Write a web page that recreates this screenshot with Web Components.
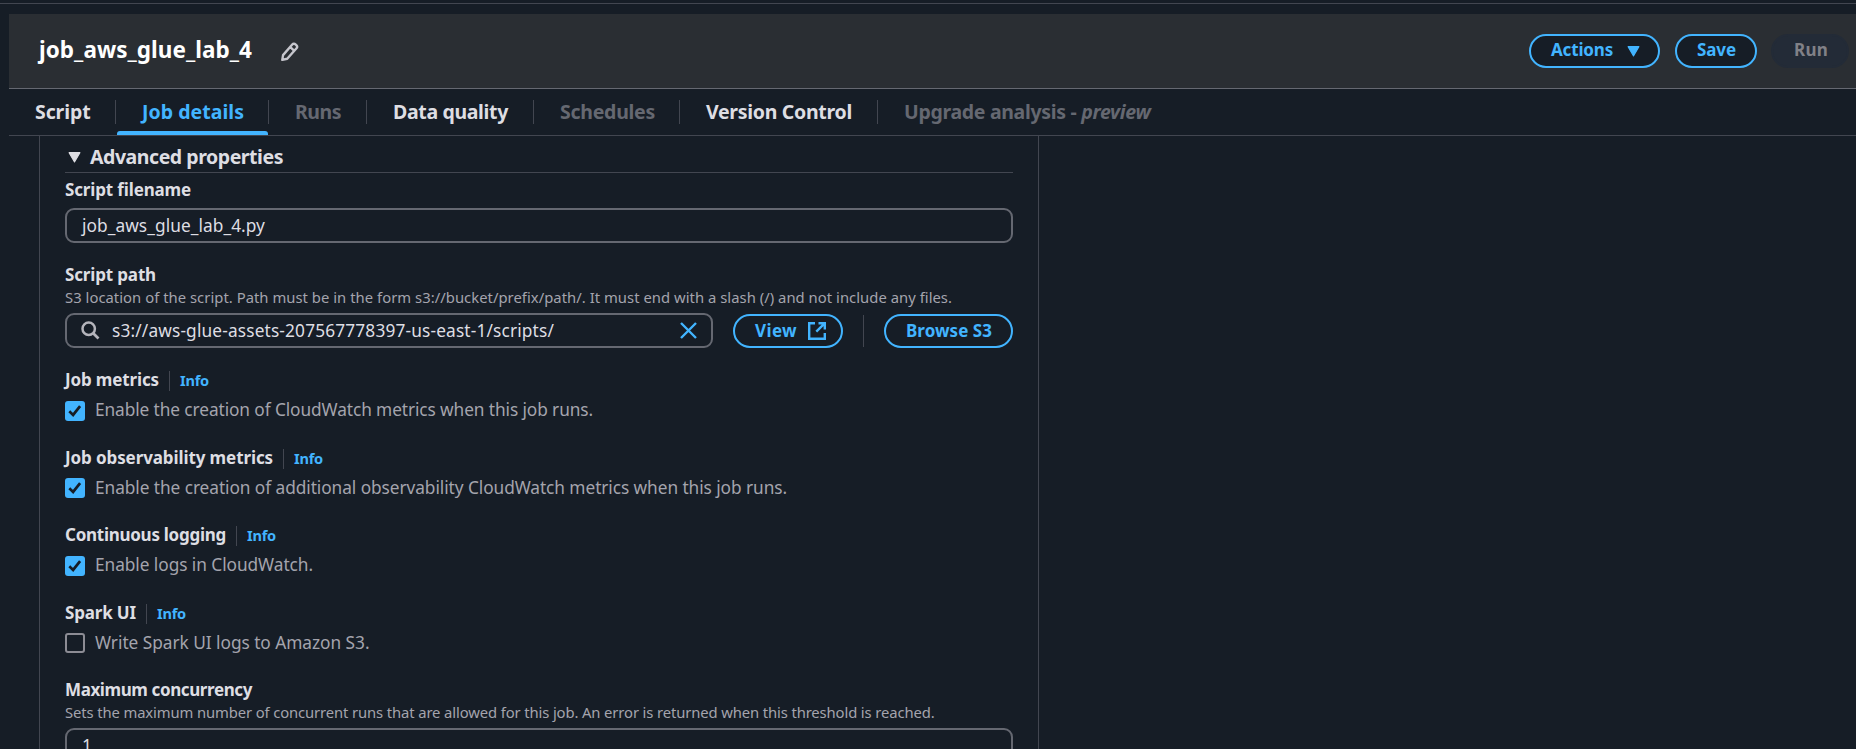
<!DOCTYPE html>
<html lang="en">
<head>
<meta charset="utf-8">
<title>job_aws_glue_lab_4</title>
<style>
html,body{margin:0;height:100%;background:#161d26;overflow:hidden}
body{font-family:"Noto Sans","Open Sans",sans-serif;color:#dedee3;font-size:17px}
</style>
</head>
<body>
<glue-page></glue-page>
<script>
const fitted = new Set();
function define(name, html, setup) {
  const tpl = document.createElement('template');
  tpl.innerHTML = html;
  customElements.define(name, class extends HTMLElement {
    constructor() {
      super();
      this.attachShadow({ mode: 'open' }).append(tpl.content.cloneNode(true));
    }
    connectedCallback() { if (setup) setup(this, this.shadowRoot); }
  });
}

/* One line of text, tracked so that it spans the width in its "w" attribute. */
define('fit-text', `<style>:host{display:inline-block;white-space:pre;flex:none}</style><slot></slot>`, el => fitted.add(el));

const icons = {
  pencil: ['0 0 20 22', '<path d="M2.4 19.8 3.2 14.8 12.9 3.6a2.4 2.4 0 0 1 3.4-.2l.9.8a2.4 2.4 0 0 1 .2 3.3L7.6 18.6ZM10.6 6.2l4.2 3.9" fill="none" stroke="currentColor" stroke-width="2.5" stroke-linejoin="round"/>'],
  caret: ['0 0 12 10', '<path d="M1 .5h10L6 9.2Z" fill="currentColor" stroke="currentColor" stroke-width="1" stroke-linejoin="round"/>'],
  search: ['0 0 19 19', '<circle cx="7.7" cy="7.7" r="6.2" fill="none" stroke="currentColor" stroke-width="2.5"/><path d="m12.2 12.2 5.3 5.3" stroke="currentColor" stroke-width="2.7"/>'],
  close: ['0 0 17 17', '<path d="m1 1 15 15M16 1 1 16" stroke="currentColor" stroke-width="2.4"/>'],
  external: ['0 0 18 18', '<path d="M7 1.2H1.2v15.6h15.6V11M10.5 1.2h6.3V7.5M16.6 1.4 8.3 9.7" fill="none" stroke="currentColor" stroke-width="2.4"/>'],
  check: ['0 0 20 20', '<path d="m4.3 10.3 3.8 3.6 7-8.8" fill="none" stroke="currentColor" stroke-width="2.7"/>']
};
define('ui-icon', `<style>:host{display:block;flex:none}svg{display:block;width:100%;height:100%}</style><svg></svg>`, (el, r) => {
  const [box, body] = icons[el.getAttribute('name')];
  const svg = r.querySelector('svg');
  svg.setAttribute('viewBox', box);
  svg.innerHTML = body;
});

define('ui-button', `<style>
:host{display:flex;align-items:center;box-sizing:border-box;height:34px;border:2px solid #42b4ff;border-radius:18px;padding:0 20px;color:#42b4ff;background:#161d26;font-weight:700;font-size:17px;line-height:28px;flex:none}
:host([disabled]){border-color:#232b37;background:#232b37;color:#818187}
</style><slot></slot>`);

define('page-header', `<style>
:host{display:flex;align-items:center;box-sizing:border-box;height:75px;margin-left:9px;padding:0 7px 0 30px;background:#2a2e33;border-bottom:1px solid #656871}
h1{margin:0 0 1px;font-size:22.5px;line-height:30px;color:#fff;font-weight:700}
.pen{width:19px;height:21px;margin:1px 0 0 27.5px;color:#c6c6cd}
.gap{flex:1}
fit-text{margin-bottom:1px}
.a{width:131px;margin-right:15px}.a ui-icon{width:13px;height:11px;margin:1px 0 0 14px}
.s{width:82px;margin-right:14px}.r{width:78px;padding-left:21px}
ui-button{padding-bottom:1px}
</style>
<h1><fit-text w="213">job_aws_glue_lab_4</fit-text></h1><ui-icon class="pen" name="pencil"></ui-icon><div class="gap"></div>
<ui-button class="a"><fit-text w="62">Actions</fit-text><ui-icon name="caret"></ui-icon></ui-button>
<ui-button class="s"><fit-text w="39">Save</fit-text></ui-button>
<ui-button class="r" disabled><fit-text w="34">Run</fit-text></ui-button>`);

define('page-tab', `<style>
:host{display:flex;position:relative;box-sizing:border-box;height:46px;padding:11px 0 0 26px;font-weight:700;font-size:19.5px;line-height:24px;flex:none}
:host([active]){color:#42b4ff}
:host([disabled]){color:#656871}
i.sep{position:absolute;right:0;top:11px;width:1px;height:24px;background:#424650}
i.bar{display:none;position:absolute;left:1px;right:1px;bottom:0;height:4px;border-radius:3px 3px 0 0;background:#42b4ff}
:host([active]) i.bar{display:block}
:host([last]) i.sep{display:none}
</style><slot></slot><i class="sep"></i><i class="bar"></i>`, el => { el.style.width = el.getAttribute('width') + 'px'; });

define('page-tabs', `<style>:host{display:flex;height:46px;margin-left:9px;border-bottom:1px solid #424650}em{font-style:italic}</style>
<page-tab width="107"><fit-text w="55.5">Script</fit-text></page-tab>
<page-tab active width="153"><fit-text w="102">Job details</fit-text></page-tab>
<page-tab disabled width="98"><fit-text w="46">Runs</fit-text></page-tab>
<page-tab width="167"><fit-text w="115">Data quality</fit-text></page-tab>
<page-tab disabled width="146"><fit-text w="95">Schedules</fit-text></page-tab>
<page-tab width="198"><fit-text w="146">Version Control</fit-text></page-tab>
<page-tab last disabled width="300"><fit-text w="246.5">Upgrade analysis - <em>preview</em></fit-text></page-tab>`);

define('text-input', `<style>
:host{display:flex;align-items:center;box-sizing:border-box;height:35px;border:2px solid #656871;border-radius:9px;padding:0 15px;color:#dedee3;font-size:17.3px;line-height:28px}
</style><slot></slot>`);

define('field-label', `<style>
:host{display:flex;height:22px;line-height:21px;font-size:17px;font-weight:700;color:#dedee3}
.info{display:none;margin-left:10px;padding-left:10px;border-left:1px solid #424650;height:20px;margin-top:2px;line-height:18px;font-size:14.6px;color:#42b4ff}
:host([info]) .info{display:block}
</style><slot></slot><span class="info"><fit-text w="29">Info</fit-text></span>`);

define('field-hint', `<style>:host{display:block;height:25px;line-height:23px;font-size:14.8px;color:#a4a4ad}</style><slot></slot>`);

define('check-option', `<style>
:host{display:flex;height:20px;color:#a4a4ad;font-size:17.3px;line-height:20px}
.box{box-sizing:border-box;width:20px;height:20px;border:2px solid #8c8c94;border-radius:3px;margin-right:10px;flex:none}
:host([checked]) .box{border:0;background:#42b4ff;color:#161d26}
.box ui-icon{display:none}
:host([checked]) .box ui-icon{display:block;width:20px;height:20px}
.t{margin-top:-.5px}
</style><span class="box"><ui-icon name="check"></ui-icon></span><span class="t"><slot></slot></span>`);

define('check-field', `<style>:host{display:flex;flex-direction:column;height:77.5px}</style>
<slot name="label"></slot><slot></slot>`);

define('advanced-panel', `<style>
:host{display:block;box-sizing:border-box;width:1000px;height:613px;margin-left:39px;padding:0 25px;border:solid #424650;border-width:0 1px;overflow:hidden}
.head{display:flex;align-items:center;box-sizing:border-box;height:37px;padding:6px 0 0 3px;border-bottom:1px solid #424650;font-size:19.5px;font-weight:700;line-height:24px;margin-bottom:6px}
.head ui-icon{width:13px;height:11px;margin-right:9px}
text-input{width:948px}
.file{height:85px}.file text-input{margin-top:7px}
.path{height:105px}
.row{display:flex;align-items:center;margin-top:2px}
.row text-input{width:648px;margin-right:20px;padding:0 14px}
.row ui-icon.q{width:19px;height:19px;color:#b4b4bb;margin-right:12px}
.row ui-icon.x{width:17px;height:17px;color:#42b4ff;margin-left:auto}
.row hr{width:1px;height:32px;border:0;margin:0 20px;background:#424650}
.v{width:110px}.v ui-icon{width:18px;height:18px;margin-left:10.5px}.b{width:129px}
check-option{margin-top:9.5px}
.max text-input{margin-top:2px}
</style>
<div class="head"><ui-icon name="caret"></ui-icon><fit-text w="193">Advanced properties</fit-text></div>
<div class="file"><field-label><fit-text w="126">Script filename</fit-text></field-label>
<text-input><fit-text w="183">job_aws_glue_lab_4.py</fit-text></text-input></div>
<div class="path"><field-label><fit-text w="91">Script path</fit-text></field-label>
<field-hint><fit-text w="887">S3 location of the script. Path must be in the form s3://bucket/prefix/path/. It must end with a slash (/) and not include any files.</fit-text></field-hint>
<div class="row"><text-input><ui-icon class="q" name="search"></ui-icon><fit-text w="442">s3://aws-glue-assets-207567778397-us-east-1/scripts/</fit-text><ui-icon class="x" name="close"></ui-icon></text-input>
<ui-button class="v"><fit-text w="42">View</fit-text><ui-icon name="external"></ui-icon></ui-button><hr>
<ui-button class="b"><fit-text w="86">Browse S3</fit-text></ui-button></div></div>
<check-field><field-label slot="label" info><fit-text w="94">Job metrics</fit-text></field-label><check-option checked><fit-text w="498">Enable the creation of CloudWatch metrics when this job runs.</fit-text></check-option></check-field>
<check-field><field-label slot="label" info><fit-text w="208">Job observability metrics</fit-text></field-label><check-option checked><fit-text w="692">Enable the creation of additional observability CloudWatch metrics when this job runs.</fit-text></check-option></check-field>
<check-field><field-label slot="label" info><fit-text w="161">Continuous logging</fit-text></field-label><check-option checked><fit-text w="218">Enable logs in CloudWatch.</fit-text></check-option></check-field>
<check-field><field-label slot="label" info><fit-text w="71">Spark UI</fit-text></field-label><check-option><fit-text w="274.5">Write Spark UI logs to Amazon S3.</fit-text></check-option></check-field>
<div class="max"><field-label><fit-text w="187">Maximum concurrency</fit-text></field-label>
<field-hint><fit-text w="869.5">Sets the maximum number of concurrent runs that are allowed for this job. An error is returned when this threshold is reached.</fit-text></field-hint>
<text-input><fit-text w="10">1</fit-text></text-input></div>`);

define('glue-page', `<style>
:host{display:block;height:749px;overflow:hidden}
.top{height:3px;border-bottom:1px solid #424650;margin-bottom:10px}
</style><div class="top"></div><page-header></page-header><page-tabs></page-tabs><advanced-panel></advanced-panel>`);

for (const el of fitted) {
  const extra = Number(el.getAttribute('w')) - el.getBoundingClientRect().width;
  el.style.letterSpacing = (extra / el.textContent.length) + 'px';
}
</script>
</body>
</html>
